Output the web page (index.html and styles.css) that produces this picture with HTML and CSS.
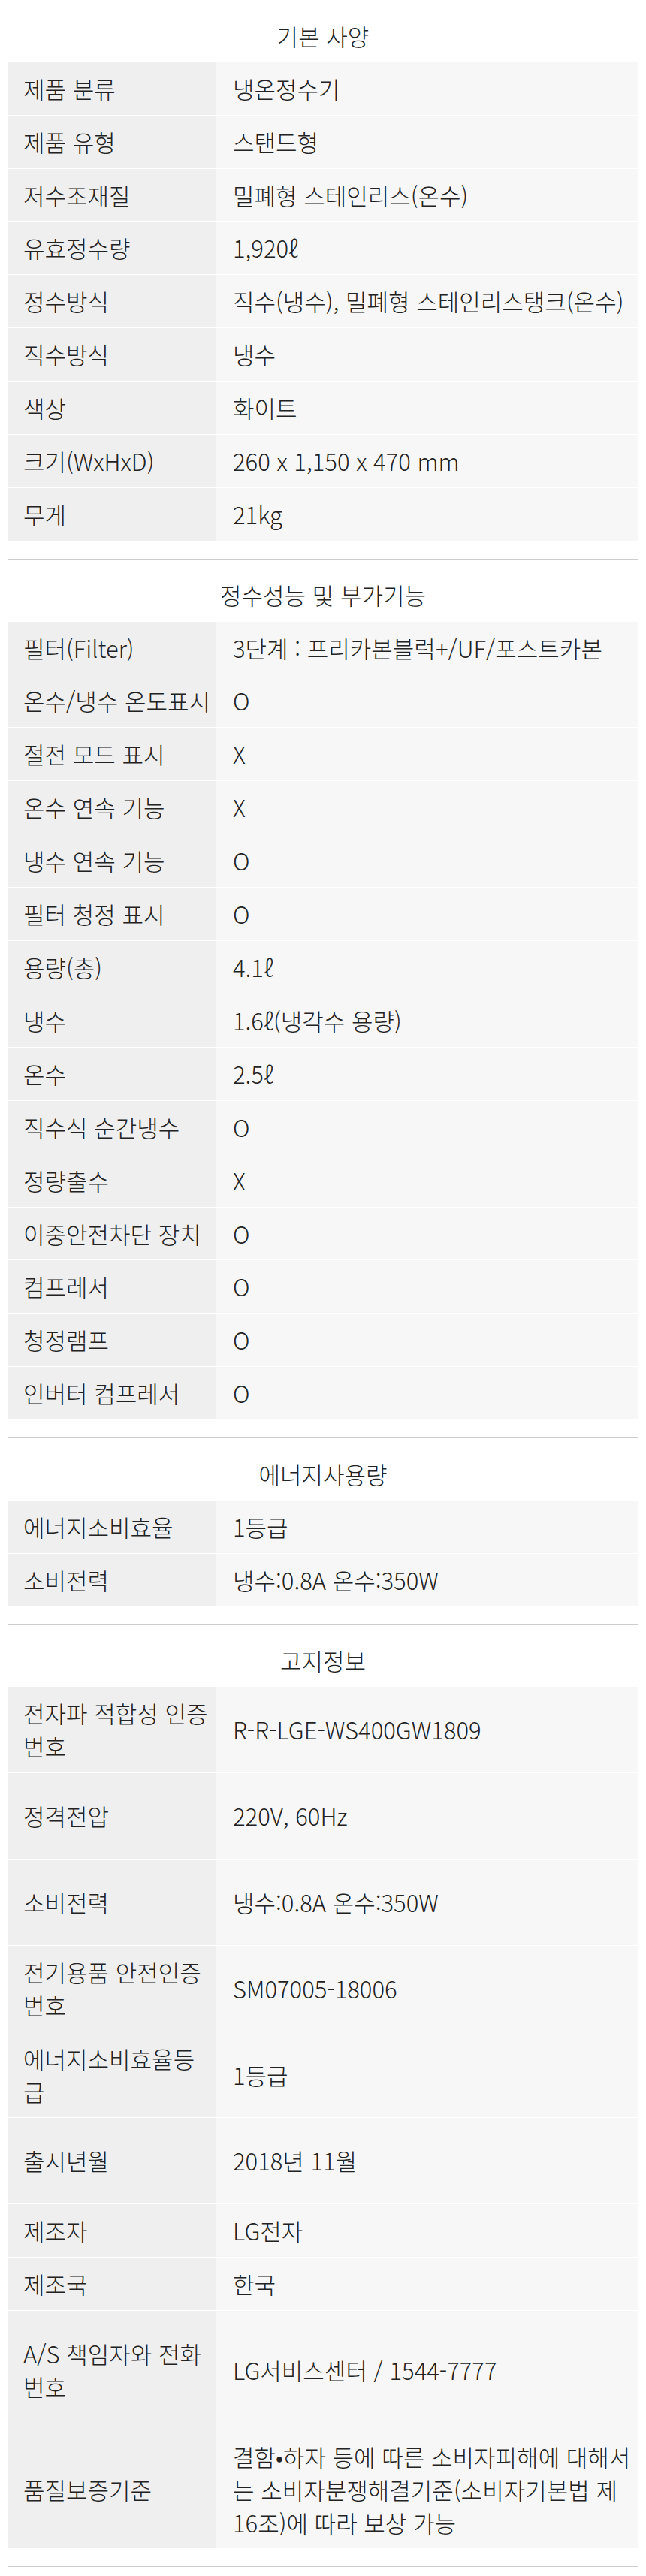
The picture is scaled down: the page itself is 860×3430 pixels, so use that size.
FILE: index.html
```html
<!DOCTYPE html>
<html lang="ko">
<head>
<meta charset="utf-8">
<title>제품 사양</title>
<link rel="stylesheet" href="styles.css">
</head>
<body>
<main class="spec">
  <section class="spec-section">
    <h2 class="spec-title">기본 사양</h2>
    <dl class="spec-table">
      <div class="spec-row"><dt class="spec-label">제품 분류</dt><dd class="spec-value">냉온정수기</dd></div>
      <div class="spec-row"><dt class="spec-label">제품 유형</dt><dd class="spec-value">스탠드형</dd></div>
      <div class="spec-row"><dt class="spec-label">저수조재질</dt><dd class="spec-value">밀폐형 스테인리스(온수)</dd></div>
      <div class="spec-row"><dt class="spec-label">유효정수량</dt><dd class="spec-value">1,920ℓ</dd></div>
      <div class="spec-row"><dt class="spec-label">정수방식</dt><dd class="spec-value">직수(냉수), 밀폐형 스테인리스탱크(온수)</dd></div>
      <div class="spec-row"><dt class="spec-label">직수방식</dt><dd class="spec-value">냉수</dd></div>
      <div class="spec-row"><dt class="spec-label">색상</dt><dd class="spec-value">화이트</dd></div>
      <div class="spec-row"><dt class="spec-label">크기(WxHxD)</dt><dd class="spec-value">260 x 1,150 x 470 mm</dd></div>
      <div class="spec-row"><dt class="spec-label">무게</dt><dd class="spec-value">21kg</dd></div>
    </dl>
  </section>

  <section class="spec-section">
    <h2 class="spec-title">정수성능 및 부가기능</h2>
    <dl class="spec-table">
      <div class="spec-row"><dt class="spec-label">필터(Filter)</dt><dd class="spec-value">3단계 : 프리카본블럭+/UF/포스트카본</dd></div>
      <div class="spec-row"><dt class="spec-label">온수/냉수 온도표시</dt><dd class="spec-value">O</dd></div>
      <div class="spec-row"><dt class="spec-label">절전 모드 표시</dt><dd class="spec-value">X</dd></div>
      <div class="spec-row"><dt class="spec-label">온수 연속 기능</dt><dd class="spec-value">X</dd></div>
      <div class="spec-row"><dt class="spec-label">냉수 연속 기능</dt><dd class="spec-value">O</dd></div>
      <div class="spec-row"><dt class="spec-label">필터 청정 표시</dt><dd class="spec-value">O</dd></div>
      <div class="spec-row"><dt class="spec-label">용량(총)</dt><dd class="spec-value">4.1ℓ</dd></div>
      <div class="spec-row"><dt class="spec-label">냉수</dt><dd class="spec-value">1.6ℓ(냉각수 용량)</dd></div>
      <div class="spec-row"><dt class="spec-label">온수</dt><dd class="spec-value">2.5ℓ</dd></div>
      <div class="spec-row"><dt class="spec-label">직수식 순간냉수</dt><dd class="spec-value">O</dd></div>
      <div class="spec-row"><dt class="spec-label">정량출수</dt><dd class="spec-value">X</dd></div>
      <div class="spec-row"><dt class="spec-label">이중안전차단 장치</dt><dd class="spec-value">O</dd></div>
      <div class="spec-row"><dt class="spec-label">컴프레서</dt><dd class="spec-value">O</dd></div>
      <div class="spec-row"><dt class="spec-label">청정램프</dt><dd class="spec-value">O</dd></div>
      <div class="spec-row"><dt class="spec-label">인버터 컴프레서</dt><dd class="spec-value">O</dd></div>
    </dl>
  </section>

  <section class="spec-section">
    <h2 class="spec-title">에너지사용량</h2>
    <dl class="spec-table">
      <div class="spec-row"><dt class="spec-label">에너지소비효율</dt><dd class="spec-value">1등급</dd></div>
      <div class="spec-row"><dt class="spec-label">소비전력</dt><dd class="spec-value">냉수:0.8A 온수:350W</dd></div>
    </dl>
  </section>

  <section class="spec-section">
    <h2 class="spec-title">고지정보</h2>
    <dl class="spec-table">
      <div class="spec-row spec-row--two"><dt class="spec-label">전자파 적합성 인증 번호</dt><dd class="spec-value">R-R-LGE-WS400GW1809</dd></div>
      <div class="spec-row spec-row--two"><dt class="spec-label">정격전압</dt><dd class="spec-value">220V, 60Hz</dd></div>
      <div class="spec-row spec-row--two"><dt class="spec-label">소비전력</dt><dd class="spec-value">냉수:0.8A 온수:350W</dd></div>
      <div class="spec-row spec-row--two"><dt class="spec-label">전기용품 안전인증 번호</dt><dd class="spec-value">SM07005-18006</dd></div>
      <div class="spec-row spec-row--two"><dt class="spec-label">에너지소비효율등급</dt><dd class="spec-value">1등급</dd></div>
      <div class="spec-row spec-row--two"><dt class="spec-label">출시년월</dt><dd class="spec-value">2018년 11월</dd></div>
      <div class="spec-row"><dt class="spec-label">제조자</dt><dd class="spec-value">LG전자</dd></div>
      <div class="spec-row"><dt class="spec-label">제조국</dt><dd class="spec-value">한국</dd></div>
      <div class="spec-row spec-row--three"><dt class="spec-label">A/S 책임자와 전화 번호</dt><dd class="spec-value">LG서비스센터 / 1544-7777</dd></div>
      <div class="spec-row spec-row--three"><dt class="spec-label">품질보증기준</dt><dd class="spec-value">결함•하자 등에 따른 소비자피해에 대해서는 소비자분쟁해결기준(소비자기본법 제16조)에 따라 보상 가능</dd></div>
    </dl>
  </section>
</main>
</body>
</html>
```

FILE: styles.css
```css
* {
  box-sizing: border-box;
}

html, body {
  margin: 0;
  padding: 0;
  background: #ffffff;
}

body {
  font-family: "Noto Sans CJK KR", "Noto Sans", sans-serif;
  font-size: 31px;
  font-weight: 300;
  line-height: 43.9px;
  color: #222222;
}

.spec {
  padding: 0 10px;
}

.spec-section {
  padding-bottom: 23px;
  border-bottom: 1px solid #cccccc;
}

.spec-title {
  margin: 0;
  padding: 25.5px 0 13.3px;
  font-size: 31px;
  font-weight: 300;
  line-height: 43.9px;
  text-align: center;
  color: #222222;
}

.spec-table {
  margin: 0;
  padding: 0;
}

.spec-row {
  display: grid;
  grid-template-columns: 278px 1fr;
  border-bottom: 1px solid #ffffff;
}

.spec-row--two {
  min-height: 114.8px;
}

.spec-row--three {
  min-height: 158.7px;
}

.spec-label,
.spec-value {
  margin: 0;
  display: flex;
  align-items: center;
  padding: 13px 5px 13px 21px;
}

.spec-label {
  background: #efefef;
}

.spec-value {
  background: #f7f7f7;
  padding-left: 22px;
  padding-right: 7px;
}
```
